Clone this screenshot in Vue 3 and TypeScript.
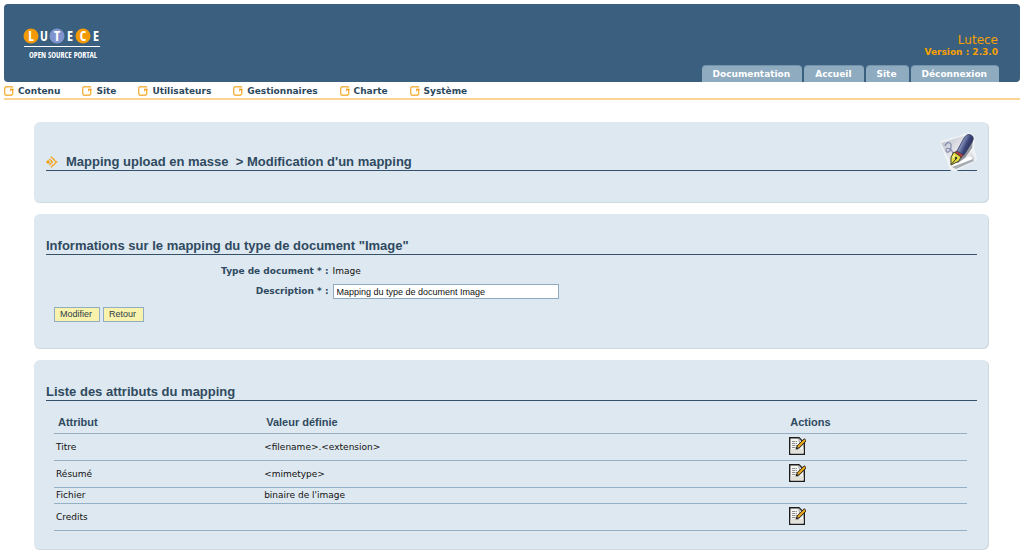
<script setup lang="ts">
import { ref } from 'vue'

interface Attribute {
  name: string
  value: string
  editable: boolean
}

const tabs: string[] = ['Documentation', 'Accueil', 'Site', 'Déconnexion']
const menu: string[] = ['Contenu', 'Site', 'Utilisateurs', 'Gestionnaires', 'Charte', 'Système']

const attributes: Attribute[] = [
  { name: 'Titre', value: '<filename>.<extension>', editable: true },
  { name: 'Résumé', value: '<mimetype>', editable: true },
  { name: 'Fichier', value: "binaire de l'image", editable: false },
  { name: 'Credits', value: '', editable: true },
]

const description = ref('Mapping du type de document Image')
</script>

<template>
  <div class="page">
    <header class="banner">
      <svg class="logo" width="80" height="36" viewBox="0 0 80 36" role="img" aria-label="Lutece open source portal">
        <circle cx="8" cy="10" r="7.5" fill="#f29a05" />
        <circle cx="34" cy="10" r="7.5" fill="#7f93cf" />
        <circle cx="60" cy="10" r="7.5" fill="#f29a05" />
        <g class="logo-letters">
          <text x="8" y="15">L</text>
          <text x="21" y="15">U</text>
          <text x="34" y="15">T</text>
          <text x="47" y="15">E</text>
          <text x="60" y="15">C</text>
          <text x="73" y="15">E</text>
        </g>
        <path d="M1 20.5H77" stroke="#fff" />
        <text class="logo-line" x="40" y="32">OPEN SOURCE PORTAL</text>
      </svg>
      <div class="side">
        <p class="product">Lutece</p>
        <p class="version">Version : 2.3.0</p>
        <nav class="tabs" aria-label="Portail">
          <a v-for="tab in tabs" :key="tab" href="#" class="tab">{{ tab }}</a>
        </nav>
      </div>
    </header>

    <nav class="menu" aria-label="Administration">
      <a v-for="item in menu" :key="item" href="#" class="menu-item">
        <svg width="10" height="10" viewBox="0 0 10 10" aria-hidden="true">
          <path d="M9 1.500L8 .7H2L.7 2V8L2 9.300H7.500L8.700 8V4" fill="none" stroke="#f5b548" stroke-width="1.400" />
          <path d="M6 3.500H9.500" stroke="#f5960c" stroke-width="1.600" />
          <path d="M6.500 3V5.500" stroke="#f5b548" />
        </svg>
        <span>{{ item }}</span>
      </a>
    </nav>

    <main class="content">
      <section class="card card-title">
        <h1 class="heading">
          <svg class="arrows" width="12" height="12" viewBox="0 0 12 12" aria-hidden="true">
            <path d="M5 .8L10.500 6L5 11.200M3.200 3L6.300 6L3.200 9" fill="none" stroke="#f59f14" stroke-width="1.500" stroke-dasharray="1.700 .3" />
            <path d="M0 6L2 4L4 6L2 8Z" fill="#f59a00" />
          </svg>
          <span>Mapping upload en masse &nbsp;&gt; Modification d'un mapping</span>
        </h1>
        <svg class="pen" width="40" height="42" viewBox="0 0 40 42" aria-hidden="true">
          <defs>
            <linearGradient id="sheet" x1="0" y1="0" x2="1" y2="1">
              <stop offset="0" stop-color="#b9bdc8" />
              <stop offset=".6" stop-color="#f4f4f6" />
              <stop offset="1" stop-color="#b9bbc0" />
            </linearGradient>
            <linearGradient id="barrel" x1="0" y1="0" x2="1" y2=".6">
              <stop offset="0" stop-color="#424d86" />
              <stop offset=".4" stop-color="#8792bd" />
              <stop offset=".65" stop-color="#3b4478" />
              <stop offset="1" stop-color="#20264e" />
            </linearGradient>
          </defs>
          <path d="M4 12L24 6L28 4H32L35 7L34 17L37 28L18 38H14Z" fill="#f0f3f5" stroke="#f0f3f5" stroke-width="4" stroke-linejoin="round" />
          <path d="M3 12L25 5L37 28L18 37L13 33Z" fill="url(#sheet)" />
          <path d="M13 33L16 32L32 25L35 28L18 36Z" fill="#fff" />
          <path d="M14 36L35 28L36 30L18 38Z" fill="#a9adb4" />
          <path d="M7 15C9 10 14 11 13 16C13 21 8 23 8 19C8 16 14 17 15 23C16 25 18 23 18 21" fill="none" stroke="#858cb0" stroke-width="1.200" />
          <path d="M17 32L23 23L31 14L35 8L34 17L27 27L20 32Z" fill="#454b59" opacity=".55" />
          <path d="M19 20L26 7Q29 2 33 4Q37 6 34 11L26 24Z" fill="url(#barrel)" stroke="#303961" stroke-width=".8" />
          <path d="M18 20L25.500 24L23 27L17 22Z" fill="#bd3940" stroke="#292b46" stroke-width=".6" />
          <path d="M16 21L23 26L21 30L13 34L13 26Z" fill="#e5df45" stroke="#44452a" />
          <path d="M13.500 33L18 28" stroke="#38391f" />
          <circle cx="18" cy="27" r="1.200" fill="#38391f" />
          <path d="M15 27L16.500 24" stroke="#fffbd0" />
        </svg>
      </section>

      <section class="card card-form">
        <h2 class="heading">Informations sur le mapping du type de document "Image"</h2>
        <form class="form" @submit.prevent>
          <div class="field">
            <span class="label">Type de document * :</span>
            <span>Image</span>
          </div>
          <div class="field">
            <label class="label" for="description">Description * :</label>
            <input id="description" v-model="description" class="text-input" type="text" />
          </div>
          <div class="buttons">
            <button class="button" type="submit">Modifier</button>
            <button class="button" type="button">Retour</button>
          </div>
        </form>
      </section>

      <section class="card card-list">
        <h2 class="heading">Liste des attributs du mapping</h2>
        <table class="table">
          <thead>
            <tr>
              <th class="col-name" scope="col">Attribut</th>
              <th class="col-value" scope="col">Valeur définie</th>
              <th scope="col">Actions</th>
            </tr>
          </thead>
          <tbody>
            <tr v-for="row in attributes" :key="row.name">
              <td>{{ row.name }}</td>
              <td>{{ row.value }}</td>
              <td>
                <a v-if="row.editable" href="#" class="edit" :aria-label="'Modifier ' + row.name">
                  <svg width="18" height="18" viewBox="0 0 18 18" aria-hidden="true">
                    <path d="M1.700 .8H11L16.300 6V17.200H1.700Z" fill="#f6f6f3" stroke="#1d1d1d" stroke-width="1.400" />
                    <path d="M2.500 12H15.600V16.500H2.500Z" fill="#e2e1da" />
                    <path d="M10.500 1L11.500 5.500L15 6Z" fill="#fff" stroke="#777" stroke-width=".7" />
                    <path d="M4 4.500H9M4 6.500H9M4 8.500H9M4 10.500H8" stroke="#909090" stroke-dasharray="3 .6" />
                    <path d="M9 12.500L15 6.500" stroke="#77756c" stroke-width="2" opacity=".5" />
                    <path d="M9.500 10.500L17.500 2.500" stroke="#1f1b12" stroke-width="3.400" />
                    <path d="M10 10L17 3" stroke="#f2ae1e" stroke-width="1.900" />
                    <path d="M7.500 12.500L8.300 9.600L10.400 11.700Z" fill="#1f1b12" />
                  </svg>
                </a>
              </td>
            </tr>
          </tbody>
        </table>
      </section>
    </main>
  </div>
</template>

<style>
body {
  background: #fff;
}
</style>

<style scoped>
.page {
  padding: 4px 4px 7px;
  font: 9px/15px Verdana, "DejaVu Sans", sans-serif;
  color: #111;
}

.banner {
  display: flex;
  justify-content: space-between;
  align-items: flex-start;
  padding: 22px 21px 0 19px;
  border-radius: 4px;
  background: #3a5f7f;
}

.logo {
  display: block;
}

.logo-letters {
  font: 14px "Open Sans Condensed", "Liberation Sans Narrow", "DejaVu Sans Condensed", sans-serif;
  text-anchor: middle;
  fill: #fff;
}

.logo-line {
  font: 8px "Open Sans Condensed", "Liberation Sans Narrow", "DejaVu Sans Condensed", sans-serif;
  text-anchor: middle;
  fill: #fff;
}

.side {
  display: flex;
  flex-direction: column;
  align-items: flex-end;
  padding-top: 6px;
  color: #f9a000;
}

.product {
  margin: 0 1px 0 0;
  font-size: 12px;
  line-height: 16px;
}

.version {
  margin: 0 1px 6px 0;
  padding-bottom: 3px;
  font-weight: bold;
  line-height: 8px;
}

.tabs {
  display: flex;
  gap: 2px;
}

.tab {
  padding: 0 12px 0 11px;
  border-top: 1px solid #7593ab;
  border-radius: 4px 4px 0 0;
  background: #8eabc0;
  color: #fff;
  font-weight: bold;
  line-height: 16px;
  text-decoration: none;
}

.menu {
  display: flex;
  gap: 22px;
  padding-top: 2px;
  border-bottom: 2px solid #fbd591;
}

.menu-item {
  display: flex;
  align-items: center;
  gap: 4px;
  color: #2c485d;
  font-weight: bold;
  line-height: 14px;
  text-decoration: none;
}

.content {
  display: flex;
  flex-direction: column;
  gap: 11px;
  padding: 22px 31px 0 30px;
}

.card {
  position: relative;
  box-sizing: border-box;
  padding: 24px 12px 27px;
  border-radius: 6px;
  background: #dee8f0;
  box-shadow: inset -1px -1px 0 #cfdae1;
}

.card-title {
  padding-top: 32px;
  padding-bottom: 32px;
}

.card-list {
  padding-bottom: 19px;
}

.heading {
  display: flex;
  align-items: center;
  gap: 8px;
  margin: 0;
  border-bottom: 1px solid #35506a;
  color: #2f4a60;
  font: bold 13px/16px Arial, "Liberation Sans", sans-serif;
}

.pen {
  position: absolute;
  top: 9px;
  right: 11px;
}

.form {
  display: grid;
  gap: 5px;
  padding: 9px 8px 0;
}

.field {
  display: grid;
  grid-template-columns: 30% 1fr;
  gap: 4px;
  align-items: center;
}

.label {
  color: #2f4a60;
  font-weight: bold;
  text-align: right;
}

.text-input {
  box-sizing: border-box;
  width: 226px;
  height: 15px;
  padding: 0 3px;
  border: 1px solid #8eabc2;
  background: #fff;
  color: #111;
  font: 9px/13px Arial, "Liberation Sans", sans-serif;
}

.buttons {
  display: flex;
  gap: 3px;
  padding-top: 3px;
}

.button {
  padding: 0 7px 0 5px;
  border: 1px solid #91adc4;
  border-radius: 0;
  background: #f8f2ad;
  color: #2c3c48;
  font: 9px/13px Arial, "Liberation Sans", sans-serif;
}

.table {
  width: calc(100% - 18px);
  margin: 11px 10px 0 8px;
  border-collapse: separate;
  border-spacing: 0;
  table-layout: fixed;
}

.table th,
.table td {
  box-sizing: border-box;
  padding: 0 2px;
  border-bottom: 1px solid #94b0c6;
  text-align: left;
  vertical-align: middle;
}

.table th {
  padding: 0 4px;
  color: #2f4a60;
  font: bold 11px/21px Arial, "Liberation Sans", sans-serif;
}

.table .col-name {
  width: 22.8%;
}

.table .col-value {
  width: 57.4%;
}

.edit {
  display: block;
  width: 18px;
  padding: 3px 0 5px;
}

.edit svg {
  display: block;
}
</style>
